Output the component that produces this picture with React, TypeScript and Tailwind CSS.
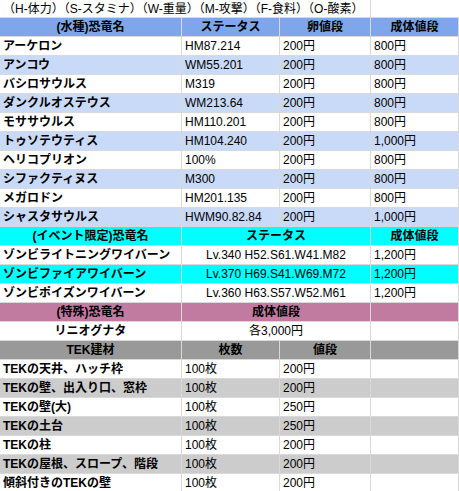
import React from "react";

type Row = { name: string; status: string; egg: string; adult: string };

const waterRows: Row[] = [
  { name: "アーケロン", status: "HM87.214", egg: "200円", adult: "800円" },
  { name: "アンコウ", status: "WM55.201", egg: "200円", adult: "800円" },
  { name: "バシロサウルス", status: "M319", egg: "200円", adult: "800円" },
  { name: "ダンクルオステウス", status: "WM213.64", egg: "200円", adult: "800円" },
  { name: "モササウルス", status: "HM110.201", egg: "200円", adult: "800円" },
  { name: "トゥソテウティス", status: "HM104.240", egg: "200円", adult: "1,000円" },
  { name: "ヘリコプリオン", status: "100%", egg: "200円", adult: "800円" },
  { name: "シファクティヌス", status: "M300", egg: "200円", adult: "800円" },
  { name: "メガロドン", status: "HM201.135", egg: "200円", adult: "800円" },
  { name: "シャスタサウルス", status: "HWM90.82.84", egg: "200円", adult: "1,000円" },
];

const eventRows = [
  { name: "ゾンビライトニングワイバーン", status: "Lv.340 H52.S61.W41.M82", adult: "1,200円" },
  { name: "ゾンビファイアワイバーン", status: "Lv.370 H69.S41.W69.M72", adult: "1,200円" },
  { name: "ゾンビポイズンワイバーン", status: "Lv.360 H63.S57.W52.M61", adult: "1,200円" },
];

const tekRows = [
  { name: "TEKの天井、ハッチ枠", count: "100枚", price: "200円" },
  { name: "TEKの壁、出入り口、窓枠", count: "100枚", price: "200円" },
  { name: "TEKの壁(大)", count: "100枚", price: "250円" },
  { name: "TEKの土台", count: "100枚", price: "250円" },
  { name: "TEKの柱", count: "100枚", price: "200円" },
  { name: "TEKの屋根、スロープ、階段", count: "100枚", price: "200円" },
  { name: "傾斜付きのTEKの壁", count: "100枚", price: "200円" },
];

const rowCls = "grid grid-cols-[182px_98px_91px_88px] h-[19px]";

function Cell({
  children,
  className = "",
}: {
  children?: React.ReactNode;
  className?: string;
}) {
  return (
    <div
      className={`flex h-[19px] items-center overflow-hidden whitespace-nowrap border-b border-r border-[#d9d9d9] px-[3px] ${className}`}
    >
      {children}
    </div>
  );
}

export default function App() {
  return (
    <div
      className="w-[459px] h-[491px] overflow-hidden bg-white text-[12px] leading-none text-black"
      style={{ fontFamily: '"Liberation Sans", "Noto Sans CJK JP", sans-serif' }}
    >
      {/* legend row */}
      <div className="grid grid-cols-[371px_88px] h-[18px]">
        <div className="flex items-center whitespace-nowrap border-b border-r border-[#d9d9d9] pl-[3px]">
          （H-体力）（S-スタミナ）（W-重量）（M-攻撃）（F-食料）（O-酸素）
        </div>
        <div className="border-b border-[#d9d9d9]" />
      </div>

      {/* water */}
      <div className={`${rowCls} bg-[#7da7ea] font-bold`}>
        <Cell className="justify-center">(水種)恐竜名</Cell>
        <Cell className="justify-center">ステータス</Cell>
        <Cell className="justify-center">卵値段</Cell>
        <Cell className="justify-center">成体値段</Cell>
      </div>
      {waterRows.map((r, i) => (
        <div key={r.name} className={`${rowCls} ${i % 2 ? "bg-[#c9daf8]" : "bg-white"}`}>
          <Cell className="font-bold">{r.name}</Cell>
          <Cell>{r.status}</Cell>
          <Cell>{r.egg}</Cell>
          <Cell>{r.adult}</Cell>
        </div>
      ))}

      {/* event */}
      <div className={`${rowCls} bg-[#00ffff] font-bold`}>
        <Cell className="justify-center">(イベント限定)恐竜名</Cell>
        <Cell className="col-span-2 justify-center">ステータス</Cell>
        <Cell className="justify-center">成体値段</Cell>
      </div>
      {eventRows.map((r, i) => (
        <div key={r.name} className={`${rowCls} ${i === 1 ? "bg-[#00ffff]" : "bg-white"}`}>
          <Cell className="font-bold">{r.name}</Cell>
          <Cell className="col-span-2 justify-center">{r.status}</Cell>
          <Cell>{r.adult}</Cell>
        </div>
      ))}

      {/* special */}
      <div className={`${rowCls} bg-[#c27ba0] font-bold`}>
        <Cell className="justify-center">(特殊)恐竜名</Cell>
        <Cell className="col-span-2 justify-center">成体値段</Cell>
        <Cell />
      </div>
      <div className={`${rowCls} bg-white`}>
        <Cell className="justify-center font-bold">リニオグナタ</Cell>
        <Cell className="col-span-2 justify-center">各3,000円</Cell>
        <Cell />
      </div>

      {/* tek */}
      <div className={`${rowCls} bg-[#999999] font-bold`}>
        <Cell className="justify-center">TEK建材</Cell>
        <Cell className="justify-center">枚数</Cell>
        <Cell className="justify-center">値段</Cell>
        <Cell />
      </div>
      {tekRows.map((r, i) => (
        <div key={r.name} className={`${rowCls} ${i % 2 ? "bg-[#cccccc]" : "bg-white"}`}>
          <Cell className="font-bold">{r.name}</Cell>
          <Cell>{r.count}</Cell>
          <Cell>{r.price}</Cell>
          <Cell />
        </div>
      ))}
    </div>
  );
}
